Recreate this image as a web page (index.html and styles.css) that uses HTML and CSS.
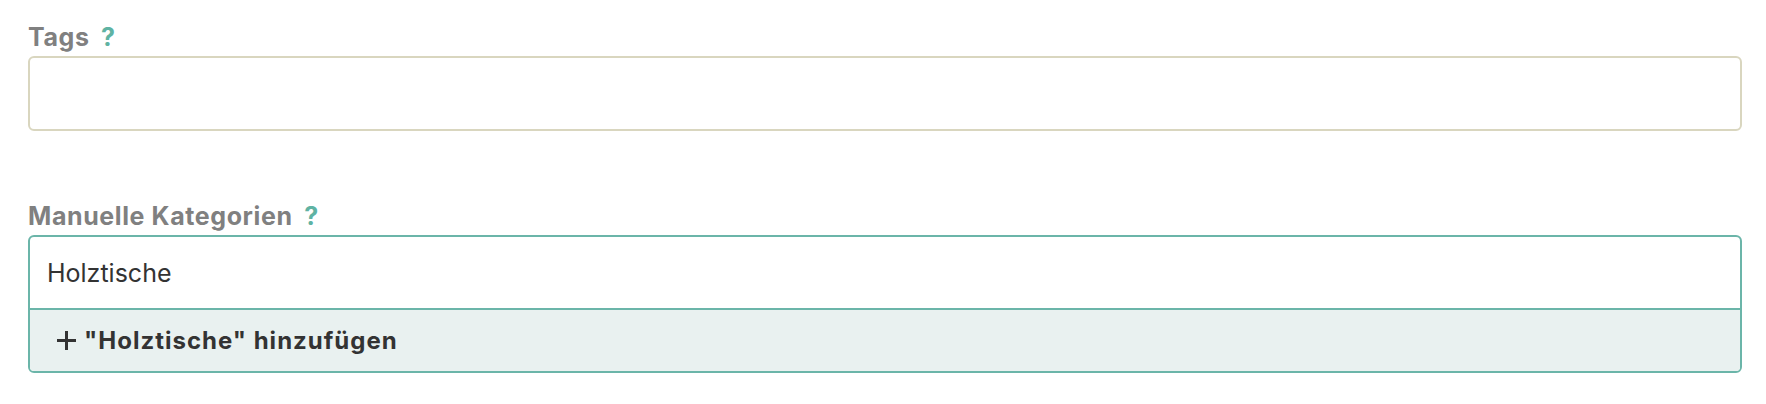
FILE: index.html
```html
<!DOCTYPE html>
<html lang="de">
<head>
    <meta charset="UTF-8">
    <meta name="viewport" content="width=device-width, initial-scale=1.0">
    <title>Produkt bearbeiten</title>
    <link rel="stylesheet" href="styles.css">
</head>
<body>
    <div class="form">
        <div class="field">
            <label class="field-label">Tags <span class="help">?</span></label>
            <div class="input input-tags"></div>
        </div>

        <div class="field field-categories">
            <label class="field-label">Manuelle Kategorien <span class="help">?</span></label>
            <div class="combo">
                <div class="combo-input">Holztische</div>
                <div class="combo-option">
                    <svg class="plus" viewBox="0 0 20 20" xmlns="http://www.w3.org/2000/svg"><path d="M10 0V20M0 10H20" stroke="#333" stroke-width="3.2"/></svg>
                    <span>"Holztische" hinzufügen</span>
                </div>
            </div>
        </div>
    </div>
</body>
</html>
```

FILE: styles.css
```css
:root {
    --label-gray: #808080;
    --teal: #6bb5a9;
    --help-teal: #5fb3a3;
    --beige: #d9d6bf;
    --text: #333;
    --option-bg: #e9f1f0;
}
body {
    font-family: Inter, "Noto Sans", sans-serif;
    margin: 0; padding: 23px 24px 0 28px; background: white; color: var(--text);
}
.field-label {
    display: block; font-size: 25px; font-weight: 700; line-height: 28px; letter-spacing: 0.6px;
    color: var(--label-gray); margin-bottom: 5px;
}
.help { color: var(--help-teal); margin-left: 5px; }
.input {
    height: 75px; box-sizing: border-box; border: 2px solid var(--beige); border-radius: 6px;
}
.field-categories { margin-top: 71px; }
.combo { border: 2px solid var(--teal); border-radius: 6px; overflow: hidden; }
.combo-input {
    height: 73px; box-sizing: border-box; padding: 0 0 0 17px;
    display: flex; align-items: center; font-size: 25px; border-bottom: 2px solid var(--teal);
}
.combo-option {
    height: 61px; display: flex; align-items: center; gap: 8px;
    padding-left: 27px; background: var(--option-bg);
    font-size: 24px; font-weight: 700; letter-spacing: 1px;
}
.plus { width: 19px; height: 19px; flex-shrink: 0; }
```
